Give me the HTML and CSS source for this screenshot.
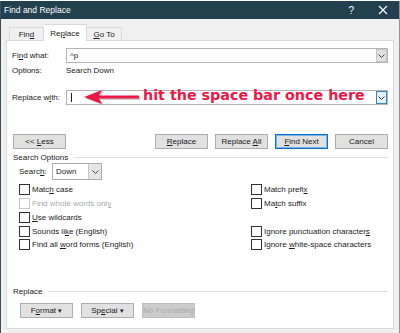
FILE: index.html
```html
<!DOCTYPE html>
<html>
<head>
<meta charset="utf-8">
<link rel="stylesheet" href="styles.css">
</head>
<body>
<div class="window">
  <div class="titlebar">
    <span class="title">Find and Replace</span>
    <span class="help">?</span>
    <svg class="close" width="10" height="10" viewBox="0 0 10 10"><path d="M1 1L9 9M9 1L1 9" stroke="#fff" stroke-width="1.2" fill="none"/></svg>
  </div>
  <div class="tabs">
    <div class="tab t-find">Fin<u>d</u></div>
    <div class="tab active">Re<u>p</u>lace</div>
    <div class="tab t-goto"><u>G</u>o To</div>
  </div>
  <div class="panel">
    <div class="row row-find">
      <span class="label">Fi<u>n</u>d what:</span>
      <div class="combo">
        <span class="combo-text">^p</span>
        <span class="drop"><svg width="7" height="4" viewBox="0 0 7 4"><path d="M0.5 0.5L3.5 3.5L6.5 0.5" stroke="#444" fill="none"/></svg></span>
      </div>
    </div>
    <div class="row row-options">
      <span class="label">Options:</span>
      <span class="value">Search Down</span>
    </div>
    <div class="row row-replace">
      <span class="label">Replace w<u>i</u>th:</span>
      <div class="combo">
        <span class="caret"></span>
        <span class="drop drop-blue"><svg width="7" height="4" viewBox="0 0 7 4"><path d="M0.5 0.5L3.5 3.5L6.5 0.5" stroke="#333" fill="none"/></svg></span>
      </div>
      <svg class="arrow" width="64" height="18" viewBox="0 0 64 18">
        <g transform="translate(1.5,1.5)" fill="#9a9a9a" opacity="0.55">
          <path d="M0 7L18 0L15 5.5H55V8.5H15L18 14Z"/>
        </g>
        <g fill="#ec1847">
          <path d="M0 7L18 0L15 5.5H55V8.5H15L18 14Z"/>
        </g>
      </svg>
      <span class="note">hit the space bar once here</span>
    </div>
    <div class="row row-buttons">
      <button class="btn">&lt;&lt; <u>L</u>ess</button>
      <div class="btn-group">
        <button class="btn"><u>R</u>eplace</button>
        <button class="btn">Replace <u>A</u>ll</button>
        <button class="btn btn-default"><u>F</u>ind Next</button>
        <button class="btn">Cancel</button>
      </div>
    </div>
    <div class="section">
      <span>Search Options</span><span class="rule"></span>
    </div>
    <div class="row row-search">
      <span class="search-label">Searc<u>h</u>:</span>
      <div class="select">
        <span class="select-text">Down</span>
        <span class="select-drop"><svg width="7" height="4" viewBox="0 0 7 4"><path d="M0.5 0.5L3.5 3.5L6.5 0.5" stroke="#444" fill="none"/></svg></span>
      </div>
    </div>
    <div class="checks">
      <label class="check"><span class="box"></span><span>Matc<u>h</u> case</span></label>
      <label class="check"><span class="box"></span><span>Match prefi<u>x</u></span></label>
      <label class="check disabled"><span class="box"></span><span>Find whole words onl<u>y</u></span></label>
      <label class="check"><span class="box"></span><span>Ma<u>t</u>ch suffix</span></label>
      <label class="check"><span class="box"></span><span><u>U</u>se wildcards</span></label>
      <span></span>
      <label class="check"><span class="box"></span><span>Sounds li<u>k</u>e (English)</span></label>
      <label class="check"><span class="box"></span><span>Ignore punctuation character<u>s</u></span></label>
      <label class="check"><span class="box"></span><span>Find all <u>w</u>ord forms (English)</span></label>
      <label class="check"><span class="box"></span><span>Ignore <u>w</u>hite-space characters</span></label>
    </div>
    <div class="section section-replace">
      <span>Replace</span><span class="rule"></span>
    </div>
    <div class="row row-format">
      <button class="btn">F<u>o</u>rmat <span class="tri">▾</span></button>
      <button class="btn">Sp<u>e</u>cial <span class="tri">▾</span></button>
      <button class="btn btn-disabled">No Formatting</button>
    </div>
  </div>
</div>
</body>
</html>
```

FILE: styles.css
```css
html, body {
  margin: 0;
  padding: 0;
  background: #ffffff;
}
body {
  padding-top: 1px;
  font-family: "Liberation Sans", Arial, sans-serif;
  font-size: 8px;
  color: #1a1a1a;
}
u {
  text-decoration: underline;
  text-underline-offset: 1px;
}
.window {
  width: 398px;
  height: 332px;
  background: #f0f0f0;
  border-left: 1px solid #3b4f5a;
  border-right: 1px solid #8c9499;
  display: flex;
  flex-direction: column;
}
.titlebar {
  height: 18px;
  background: #22404f;
  color: #ffffff;
  display: flex;
  align-items: center;
  padding-left: 3px;
  font-size: 8.5px;
}
.title {
  flex: 1;
}
.help {
  font-size: 10px;
  margin-right: 24px;
}
.close {
  margin-right: 11px;
}
.tabs {
  display: flex;
  align-items: flex-end;
  height: 21px;
  padding-left: 8px;
  position: relative;
  z-index: 2;
}
.tab {
  height: 12px;
  border: 1px solid #d9d9d9;
  border-bottom: none;
  background: #f0f0f0;
  display: flex;
  align-items: center;
  justify-content: center;
  font-size: 8px;
}
.t-find {
  width: 33px;
}
.t-goto {
  width: 34px;
  border-left: none;
}
.tab.active {
  width: 42px;
  height: 16px;
  margin-bottom: -1px;
  background: #ffffff;
  border-color: #d9d9d9;
  border-left: none;
}
.panel {
  margin-left: 5px;
  width: 386px;
  height: 287px;
  border: 1px solid #d9d9d9;
  background: #ffffff;
  position: relative;
  z-index: 1;
  display: flex;
  flex-direction: column;
}
.row {
  display: flex;
  align-items: center;
  padding-left: 5px;
}
.label {
  width: 54px;
}
.row-find {
  margin-top: 7px;
  height: 15px;
}
.combo {
  width: 320px;
  height: 13px;
  border: 1px solid #b5b5b5;
  background: #fff;
  display: flex;
  align-items: center;
  position: relative;
}
.combo-text {
  flex: 1;
  padding-left: 3px;
}
.drop {
  width: 11px;
  height: 13px;
  background: #e1e1e1;
  border: 1px solid #c4c4c4;
  display: flex;
  align-items: center;
  justify-content: center;
  box-sizing: border-box;
}
.drop-blue {
  background: #e5f1fb;
  border: 1px solid #3b83c4;
  margin-left: auto;
}
.row-options {
  margin-top: 2px;
  height: 10px;
}
.row-replace {
  margin-top: 15px;
  height: 15px;
  position: relative;
}
.caret {
  width: 1px;
  height: 9px;
  background: #222;
  margin-left: 4px;
}
.arrow {
  position: absolute;
  left: 77px;
  top: 0px;
}
.note {
  position: absolute;
  left: 136px;
  top: -3px;
  font-family: "DejaVu Sans", Verdana, sans-serif;
  font-weight: bold;
  font-size: 14.3px;
  color: #ec1847;
  white-space: nowrap;
}
.row-buttons {
  margin-top: 29px;
  height: 15px;
  padding-left: 6px;
  padding-right: 5px;
  justify-content: space-between;
}
.btn-group {
  display: flex;
  gap: 7px;
}
.btn {
  width: 53px;
  height: 15px;
  padding: 0;
  margin: 0;
  border: 1px solid #adadad;
  background: #e1e1e1;
  font-family: "Liberation Sans", Arial, sans-serif;
  font-size: 8px;
  color: #1a1a1a;
  box-sizing: border-box;
}
.btn-default {
  border: 1px solid #0a6fcf;
  box-shadow: inset 0 0 0 1px #7db3e6;
}
.btn-disabled {
  color: #a9a9a9;
  background: #cccccc;
  border-color: #bfbfbf;
}
.tri {
  font-size: 7px;
}
.section {
  margin-top: 3px;
  height: 10px;
  padding-left: 6px;
  padding-right: 5px;
  display: flex;
  align-items: center;
  gap: 6px;
}
.rule {
  flex: 1;
  height: 1px;
  background: #e0e0e0;
}
.row-search {
  margin-top: 1px;
  height: 17px;
  padding-left: 12px;
}
.search-label {
  width: 33px;
}
.select {
  width: 48px;
  height: 15px;
  border: 1px solid #adadad;
  display: flex;
  align-items: center;
  background: #fff;
}
.select-text {
  flex: 1;
  padding-left: 3px;
}
.select-drop {
  width: 12px;
  height: 15px;
  background: #e6e6e6;
  border-left: 1px solid #c8c8c8;
  display: flex;
  align-items: center;
  justify-content: center;
}
.checks {
  margin-top: 3px;
  padding-left: 12px;
  display: grid;
  grid-template-columns: 232px 1fr;
  grid-auto-rows: 13.75px;
}
.check {
  display: flex;
  align-items: center;
  gap: 2px;
}
.box {
  width: 9px;
  height: 9px;
  border: 1px solid #333;
  background: #fff;
}
.check.disabled {
  color: #a9a9a9;
}
.check.disabled .box {
  border-color: #c8c8c8;
}
.section-replace {
  margin-top: 35px;
}
.row-format {
  margin-top: 6px;
  padding-left: 13px;
  gap: 8px;
}
```
